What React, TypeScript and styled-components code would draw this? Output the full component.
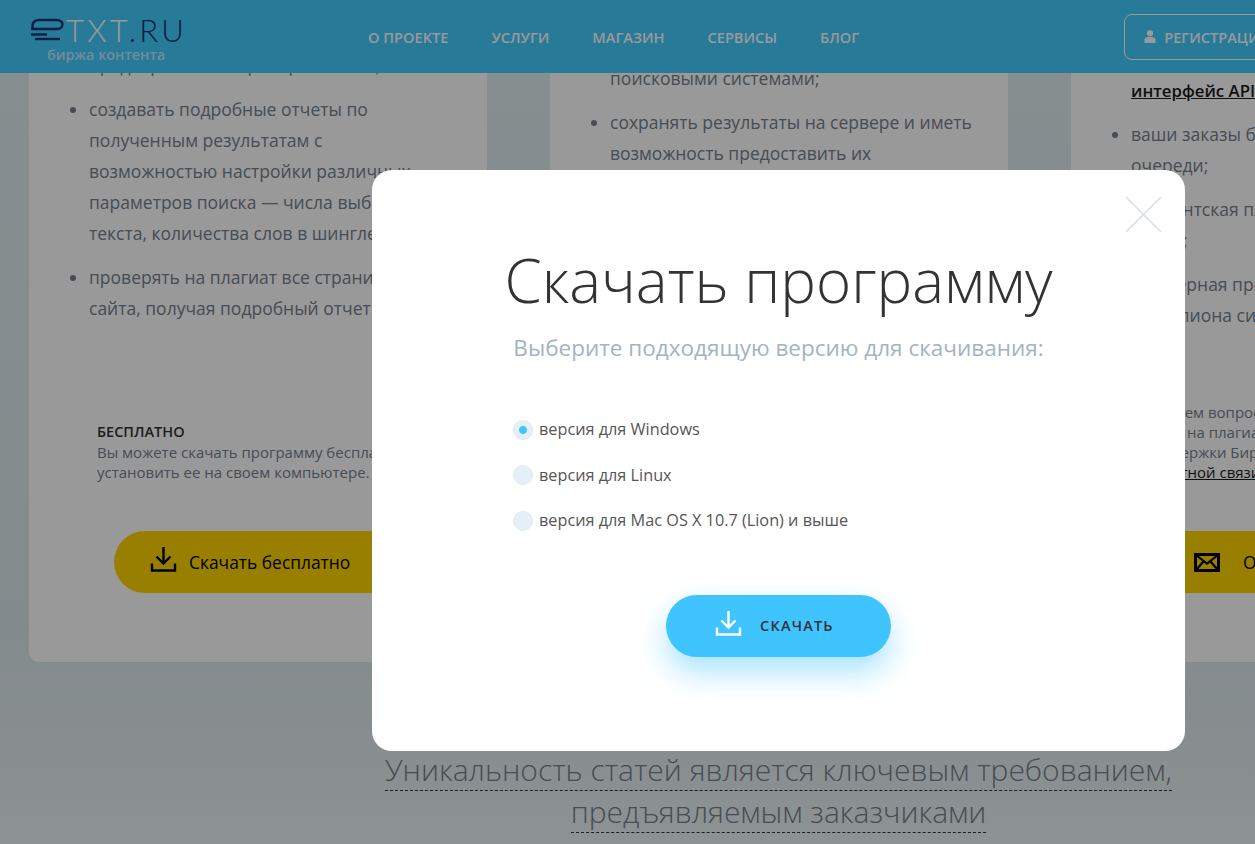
import * as React from "react"
import styled, {createGlobalStyle} from "styled-components"

const GlobalStyle = createGlobalStyle`
  html, body {
    margin: 0;
    height: 100%;
    overflow: hidden;
    background: #e1eef2;
    font-family: "Open Sans", "Liberation Sans", sans-serif;
  }
  * {
    box-sizing: border-box;
  }
`

const DownloadIcon = ({color}: {color: string}) => (
  <DownloadGlyph width="27" height="27" viewBox="0 0 27 27" fill="none" stroke={color} strokeWidth="2.4">
    <path d="M13.5 1V17" />
    <path d="M6.5 10.5L13.5 17.5L20.5 10.5" />
    <path d="M2 17.5V24.5H25V17.5" />
  </DownloadGlyph>
)

const MailIcon = () => (
  <MailGlyph width="26" height="19" viewBox="0 0 26 19" fill="none" stroke="#000" strokeWidth="3">
    <rect x="1.5" y="1.5" width="23" height="16" />
    <path d="M2 2L13 10.5L24 2" strokeWidth="2.2" />
    <path d="M2 17L9.5 8.5M24 17L16.5 8.5" strokeWidth="2.2" />
  </MailGlyph>
)

const UserIcon = () => (
  <svg width="12" height="13" viewBox="0 0 12 13" fill="#fff">
    <circle cx="6" cy="3.3" r="3.1" />
    <path d="M0.5 13V10C0.5 8 2 7 4 7H8C10 7 11.5 8 11.5 10V13Z" />
  </svg>
)

const App = () => {
  return (
    <>
      <GlobalStyle />
      <Page>
        <Header>
          <Logo>
            <LogoMark>
              <LogoGlyph width="36" height="23" viewBox="0 0 36 23" fill="none" stroke="#0a3570" strokeWidth="2.4">
                <path d="M1 11H27C30.5 11 32.5 9 32.5 6.5C32.5 4 30.5 2 27 2H9C5 2 2.5 4.5 2.5 8V11" />
                <path d="M1 16.5H17" />
                <path d="M5 21H30" />
              </LogoGlyph>
              <LogoText>TXT<LogoAccent>.RU</LogoAccent></LogoText>
            </LogoMark>
            <LogoCaption>биржа контента</LogoCaption>
          </Logo>
          <Nav>
            <NavLink>О проекте</NavLink>
            <NavLink>Услуги</NavLink>
            <NavLink>Магазин</NavLink>
            <NavLink>Сервисы</NavLink>
            <NavLink>Блог</NavLink>
          </Nav>
          <RegisterButton>
            <UserIcon />
            Регистрация
          </RegisterButton>
        </Header>

        <Cards>
          <Card $top={50}>
            <List>
              <Item>предварительно проверять текст;</Item>
              <Item>
                создавать подробные отчеты по<br />
                полученным результатам с<br />
                возможностью настройки различных<br />
                параметров поиска — числа выборки,<br />
                текста, количества слов в шингле;
              </Item>
              <Item>
                проверять на плагиат все страницы<br />
                сайта, получая подробный отчет.
              </Item>
            </List>
            <Note $indent={68}>
              <NoteTitle>Бесплатно</NoteTitle>
              Вы можете скачать программу бесплатно и<br />
              установить ее на своем компьютере.
            </Note>
            <YellowButton>
              <DownloadIcon color="#000" />
              Скачать бесплатно
            </YellowButton>
          </Card>

          <Card $top={32}>
            <List>
              <Item>
                сравнивать тексты с найденными<br />
                поисковыми системами;
              </Item>
              <Item>
                сохранять результаты на сервере и иметь<br />
                возможность предоставить их
              </Item>
            </List>
          </Card>

          <Card $top={44}>
            <List>
              <Item>
                доступ через удобный<br />
                <ApiLink>интерфейс API</ApiLink>
              </Item>
              <Item>
                ваши заказы без<br />
                очереди;
              </Item>
              <Item>
                абонентская плата<br />
                малая;
              </Item>
              <Item>
                примерная проверка<br />
                1 миллиона символов
              </Item>
            </List>
            <Note $indent={74}>
              По всем вопросам проверки<br />
              теста на плагиат пишите в службу<br />
              поддержки Биржи через форму<br />
              <NoteLink>обратной связи</NoteLink>
            </Note>
            <YellowButton>
              <MailIcon />
              Обратная связь
            </YellowButton>
          </Card>
        </Cards>

        <Heading>
          <HeadingLine>Уникальность статей является ключевым требованием,</HeadingLine>
          <HeadingLine>предъявляемым заказчиками</HeadingLine>
        </Heading>
      </Page>

      <Overlay />

      <Modal>
        <CloseButton width="37" height="37" viewBox="0 0 37 37" stroke="#d8e2e7" strokeWidth="1.7">
          <path d="M1 1L36 36M36 1L1 36" />
        </CloseButton>
        <ModalTitle>Скачать программу</ModalTitle>
        <ModalSubtitle>Выберите подходящую версию для скачивания:</ModalSubtitle>
        <Options>
          <Option><Radio $checked />версия для Windows</Option>
          <Option><Radio />версия для Linux</Option>
          <Option><Radio />версия для Mac OS X 10.7 (Lion) и выше</Option>
        </Options>
        <DownloadButton>
          <DownloadIcon color="#fff" />
          Скачать
        </DownloadButton>
      </Modal>
    </>
  )
}

const Page = styled.div`
  width: 1255px;
  height: 844px;
  overflow: hidden;
  background: linear-gradient(180deg, #e1eef2 0%, #dbe7eb 75%, #ebf3f6 100%);
`
const Header = styled.header`
  position: fixed;
  top: 0;
  left: 0;
  width: 1255px;
  height: 73px;
  z-index: 2;
  display: flex;
  align-items: center;
  background: #44cbff;
  overflow: hidden;
`
const Logo = styled.div`
  width: 368px;
  padding: 2px 0 0 30px;
  flex-shrink: 0;
`
const LogoMark = styled.div`
  display: flex;
  align-items: center;
  height: 36px;
`
const LogoGlyph = styled.svg`
  flex-shrink: 0;
`
const LogoText = styled.span`
  font: 300 31px/36px "Lato", sans-serif;
  color: #fff;
  letter-spacing: 3.3px;
`
const LogoAccent = styled.span`
  color: #0a3570;
`
const LogoCaption = styled.div`
  margin: -2px 0 0 17px;
  font: 600 14.4px/18px "Open Sans", sans-serif;
  color: #bfe8ff;
`
const Nav = styled.nav`
  display: flex;
  gap: 43px;
`
const NavLink = styled.a`
  font: 600 14.6px/20px "Open Sans", sans-serif;
  text-transform: uppercase;
  white-space: nowrap;
  color: #fff;
`
const RegisterButton = styled.a`
  flex-shrink: 0;
  display: flex;
  align-items: center;
  gap: 8px;
  width: 200px;
  height: 46px;
  margin-left: 265px;
  padding-left: 19px;
  border: 1px solid #fff;
  border-radius: 8px;
  font: 600 14.6px/20px "Open Sans", sans-serif;
  text-transform: uppercase;
  color: #fff;
`
const Cards = styled.div`
  display: grid;
  grid-template-columns: repeat(3, 458px);
  gap: 63px;
  padding-left: 29px;
`
const Card = styled.section<{$top: number}>`
  display: flex;
  flex-direction: column;
  height: 662px;
  padding-top: ${p => p.$top}px;
  background: #fff;
  border-radius: 0 0 10px 10px;
`
const List = styled.ul`
  margin: 0;
  padding: 0 0 0 60px;
  font: 400 17.5px/31px "Open Sans", sans-serif;
  color: #75808c;
  white-space: nowrap;
`
const Item = styled.li`
  margin-bottom: 13px;
`
const ApiLink = styled.a`
  font-size: 16.8px;
  font-weight: 600;
  color: #1a1a1a;
  text-decoration: underline;
`
const Note = styled.div<{$indent: number}>`
  margin: auto 0 0 ${p => p.$indent}px;
  font: 400 15px/20px "Open Sans", sans-serif;
  color: #75808c;
  white-space: nowrap;
`
const NoteTitle = styled.div`
  font-size: 14.5px;
  font-weight: 600;
  color: #333;
  text-transform: uppercase;
`
const NoteLink = styled.a`
  color: #1a1a1a;
  text-decoration: underline;
`
const YellowButton = styled.a`
  display: flex;
  align-items: center;
  gap: 12px;
  width: 340px;
  height: 62px;
  margin: 49px 0 69px 85px;
  padding-left: 36px;
  border-radius: 31px;
  background: #ffd400;
  font: 400 17.4px/24px "Open Sans", sans-serif;
  color: #000;
`
const DownloadGlyph = styled.svg`
  flex-shrink: 0;
  margin-bottom: 6px;
`
const MailGlyph = styled.svg`
  margin: 0 11px 0 2px;
  flex-shrink: 0;
`
const Heading = styled.h2`
  margin: 87px 0 0 157px;
  width: 1243px;
  text-align: center;
  font: 300 30px/42px "Open Sans", sans-serif;
  color: #75808c;
`
const HeadingLine = styled.span`
  display: table;
  margin: 0 auto;
  border-bottom: 1px dashed #333;
  line-height: 41px;
`
const Overlay = styled.div`
  position: fixed;
  inset: 0;
  z-index: 3;
  background: rgba(0, 0, 0, 0.4);
`
const Modal = styled.div`
  position: fixed;
  left: 372px;
  top: 170px;
  z-index: 4;
  width: 813px;
  height: 581px;
  display: flex;
  flex-direction: column;
  padding-top: 68px;
  background: #fff;
  border-radius: 20px;
`
const CloseButton = styled.svg`
  position: absolute;
  top: 26px;
  right: 23px;
`
const ModalTitle = styled.h1`
  margin: 0;
  text-align: center;
  font: 300 60px/84px "Open Sans", sans-serif;
  color: #333;
`
const ModalSubtitle = styled.div`
  margin-top: 10px;
  text-align: center;
  font: 400 22.5px/32px "Open Sans", sans-serif;
  color: #a2b4c2;
`
const Options = styled.div`
  display: flex;
  flex-direction: column;
  gap: 22.5px;
  margin: 54px 0 0 141px;
`
const Option = styled.label`
  display: flex;
  align-items: center;
  gap: 6px;
  height: 23px;
  font: 400 16.25px/23px "Open Sans", sans-serif;
  color: #555;
`
const Radio = styled.span<{$checked?: boolean}>`
  width: 20px;
  height: 20px;
  border-radius: 50%;
  background: ${p => p.$checked
    ? "radial-gradient(circle, #40c4ff 0 3.5px, #e6eff5 4.5px)"
    : "#e6eff5"};
  border: 1px solid #dfeaf1;
`
const DownloadButton = styled.a`
  align-self: center;
  display: flex;
  align-items: center;
  gap: 18px;
  width: 225px;
  height: 62px;
  margin-top: 63px;
  padding-left: 49px;
  border-radius: 31px;
  background: #40c4ff;
  box-shadow: 0 15px 30px rgba(64, 196, 255, 0.45);
  font: 600 14.5px/20px "Open Sans", sans-serif;
  letter-spacing: 1.2px;
  text-transform: uppercase;
  color: #333;
`

export default App
